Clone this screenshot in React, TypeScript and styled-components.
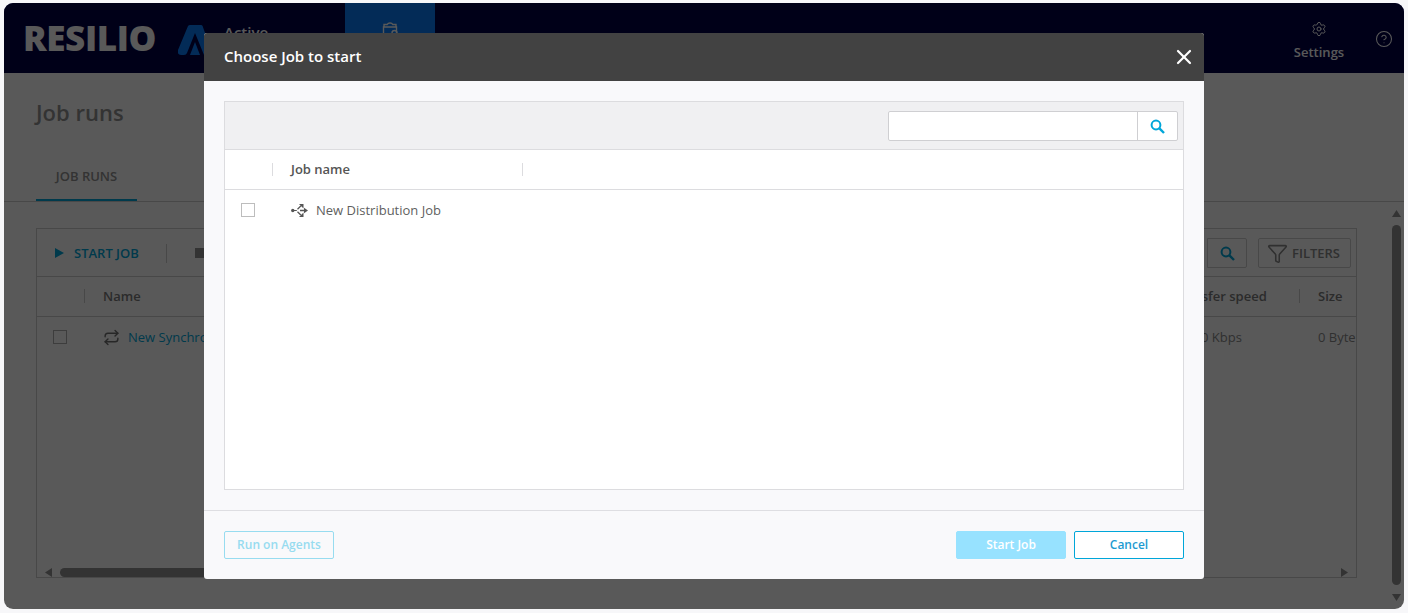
import React from 'react';
import styled, { createGlobalStyle } from 'styled-components';
import { CircleHelp, Funnel, Repeat, Settings, X } from 'lucide-react';

const Global = createGlobalStyle`
  html, body { margin: 0; padding: 0; background: #f7f7f9; overflow: hidden; }
  * { box-sizing: border-box; }
  body { font-family: "Open Sans", "Liberation Sans", sans-serif; }
`;

const Page = styled.div`
  width: 1408px;
  height: 613px;
  padding: 3px 4px 4px;
`;

const AppWindow = styled.div`
  position: relative;
  width: 1400px;
  height: 606px;
  border-radius: 9px;
  overflow: hidden;
  background: #fff;
  display: flex;
  flex-direction: column;
`;

const TopBar = styled.header`
  height: 70px;
  flex: none;
  background: #000046;
  display: flex;
  align-items: stretch;
  color: #fff;
  padding-left: 20px;
`;

const Wordmark = styled.div`
  width: 154px;
  font-size: 35px;
  line-height: 70px;
  font-weight: 800;
  letter-spacing: -0.4px;
  margin-left: -1px;
  padding-right: 0;
  flex: none;
`;

const ProductMark = styled.svg`
  width: 33px;
  height: 32px;
  margin: 21px 0 0 1px;
  flex: none;
`;

const ProductName = styled.div`
  width: 121px;
  margin-left: 13px;
  padding-top: 19px;
  font-size: 15px;
  line-height: 20px;
  font-weight: 600;
`;

const NavTile = styled.div`
  width: 90px;
  background: #097bf9;
  display: flex;
  flex-direction: column;
  align-items: center;
  padding-top: 18px;
`;

const TopRight = styled.div`
  margin-left: auto;
  display: flex;
  align-items: flex-start;
`;

const SettingsItem = styled.div`
  width: 60px;
  margin-right: 15px;
  display: flex;
  flex-direction: column;
  align-items: center;
  padding-top: 18px;
  font-size: 13px;
  line-height: 18px;
  font-weight: 600;
  color: #ffffff;
  gap: 6px;
`;

const HelpSlot = styled.div`
  width: 40px;
  padding: 27px 0 0 11px;
`;

const Main = styled.main`
  flex: 1;
  display: flex;
  flex-direction: column;
  min-height: 0;
  background: #fff;
`;

const Title = styled.h1`
  margin: 0;
  padding: 24px 0 0 32px;
  height: 78px;
  font-size: 22px;
  line-height: 30px;
  font-weight: 600;
  color: #929292;
`;

const TabBar = styled.div`
  height: 51px;
  padding-left: 32px;
  border-bottom: 1px solid #cecece;
  display: flex;
`;

const Tab = styled.div`
  width: 101px;
  text-align: center;
  font-size: 13px;
  line-height: 50px;
  font-weight: 600;
  color: #929292;
  border-bottom: 2px solid #00a6d9;
  height: 50px;
`;

const Content = styled.div`
  flex: 1;
  min-height: 0;
  display: flex;
  padding: 26px 3px 0 32px;
`;

const Panel = styled.section`
  width: 1321px;
  height: 350px;
  border: 1px solid #cecece;
  display: flex;
  flex-direction: column;
  position: relative;
  overflow: hidden;
`;

const Toolbar = styled.div`
  height: 48px;
  flex: none;
  display: flex;
  align-items: center;
  padding: 1px 5px 0 18px;
  border-bottom: 1px solid #cecece;
`;

const ToolAction = styled.div`
  display: flex;
  align-items: center;
  gap: 10px;
  font-size: 13px;
  font-weight: 600;
  color: #00a6d9;
  width: 111px;
`;

const Separator = styled.span`
  width: 1px;
  height: 19px;
  background: #cecece;
  flex: none;
`;

const StopSquare = styled.span`
  width: 10px;
  height: 10px;
  margin-left: 28px;
  background: #929292;
`;

const ToolSearch = styled.div`
  margin-left: auto;
  width: 40px;
  height: 30px;
  border: 1px solid #cecece;
  display: flex;
  align-items: center;
  justify-content: center;
  color: #00a6d9;
  border-radius: 0 2px 2px 0;
`;

const FilterButton = styled.div`
  margin-left: 11px;
  width: 93px;
  height: 30px;
  border: 1px solid #cecece;
  border-radius: 2px;
  display: flex;
  align-items: center;
  padding-left: 8px;
  gap: 4px;
  font-size: 13px;
  font-weight: 600;
  color: #8a8a8a;
`;

const PanelRow = styled.div<{ $head?: boolean }>`
  display: grid;
  grid-template-columns: 47px 1070px 145px 60px;
  align-items: center;
  height: 40px;
  flex: none;
  font-size: 13px;
  color: #929292;
  padding-bottom: ${(p) => (p.$head ? '1px' : '0')};
  border-bottom: ${(p) => (p.$head ? '1px solid #cecece' : 'none')};
`;

const PanelHeadCell = styled.div<{ $first?: boolean }>`
  height: 14px;
  line-height: 14px;
  padding-left: 18px;
  font-weight: 600;
  color: #7b7b7b;
  white-space: nowrap;
  border-left: ${(p) => (p.$first ? 'none' : '1px solid #cecece')};
`;

const PanelCell = styled.div<{ $indent?: number }>`
  padding-left: ${(p) => p.$indent ?? 19}px;
  white-space: nowrap;
  display: flex;
  align-items: center;
  gap: 8px;
  color: #8a8a8a;
`;

const PanelLink = styled.span`
  color: #00a6d9;
`;

const SyncIcon = styled(Repeat)`
  color: #707070;
  flex: none;
`;

const PanelBox = styled.span`
  display: block;
  width: 14px;
  height: 14px;
  margin-left: 16px;
  border: 1px solid #b0b0b0;
`;

const HScroll = styled.div`
  position: absolute;
  left: 0;
  right: 0;
  bottom: 0;
  height: 12px;
  display: flex;
  align-items: flex-end;
  padding: 0 7px 0 8px;
  gap: 7px;
`;

const HThumb = styled.div`
  width: 1000px;
  height: 9px;
  border-radius: 5px;
  background: #929292;
  margin-right: auto;
`;

const VArrow = styled.svg`
  width: 9px;
  height: 8px;
  flex: none;
  fill: #929292;
`;

const HArrow = styled.svg`
  width: 8px;
  height: 9px;
  flex: none;
  fill: #929292;
`;

const VScroll = styled.div`
  margin-left: auto;
  width: 9px;
  margin-top: -21px;
  height: 398px;
  display: flex;
  flex-direction: column;
  align-items: center;
  justify-content: space-between;
  padding-top: 3px;
  padding-bottom: 3px;
`;

const VThumb = styled.div`
  width: 9px;
  flex: 1;
  margin: 7px 0 9px;
  border-radius: 5px;
  background: #929292;
`;

const Backdrop = styled.div`
  position: absolute;
  inset: 0;
  background: rgba(0, 0, 0, 0.65);
  display: flex;
  justify-content: center;
  align-items: flex-start;
  padding-top: 30px;
`;

const Modal = styled.div`
  width: 1000px;
  height: 546px;
  background: #f9f9fb;
  border-radius: 3px;
  overflow: hidden;
  display: flex;
  flex-direction: column;
`;

const ModalHeader = styled.div`
  height: 48px;
  flex: none;
  background: #424242;
  color: #fff;
  display: flex;
  align-items: center;
  justify-content: space-between;
  padding: 0 8px 2px 20px;
  font-size: 15px;
  font-weight: 600;
`;

const CloseButton = styled.button`
  border: 0;
  background: none;
  padding: 0;
  width: 24px;
  height: 24px;
  color: #fff;
  display: flex;
  margin-top: 2px;
`;

const ModalBody = styled.div`
  flex: 1;
  padding: 20px 20px;
  min-height: 0;
  border-bottom: 1px solid #dedee2;
`;

const Grid = styled.div`
  height: 389px;
  border: 1px solid #dcdcdf;
  background: #fff;
  display: flex;
  flex-direction: column;
`;

const GridToolbar = styled.div`
  height: 48px;
  flex: none;
  background: #f0f0f2;
  border-bottom: 1px solid #dcdcdf;
  display: flex;
  justify-content: flex-end;
  align-items: center;
  padding: 1px 5px 0 0;
`;

const SearchBox = styled.div`
  width: 290px;
  height: 30px;
  display: flex;
  background: #fff;
  border: 1px solid #cfcfd2;
  border-radius: 2px;
`;

const SearchInput = styled.input`
  flex: 1;
  min-width: 0;
  border: 0;
  outline: 0;
  background: transparent;
`;

const SearchButton = styled.div`
  width: 40px;
  border-left: 1px solid #cfcfd2;
  color: #00a6d9;
  display: flex;
  align-items: center;
  justify-content: center;
`;

const GridHead = styled.div`
  height: 40px;
  flex: none;
  border-bottom: 1px solid #dcdcdf;
  display: grid;
  grid-template-columns: 47px 250px 1fr;
  align-items: center;
  font-size: 13px;
  font-weight: 600;
  color: #555;
`;

const HeadCell = styled.div<{ $first?: boolean }>`
  height: 13px;
  line-height: 13px;
  padding-left: 18px;
  border-left: ${(p) => (p.$first ? 'none' : '1px solid #dcdcdf')};
`;

const GridRow = styled.div`
  height: 40px;
  display: grid;
  grid-template-columns: 47px 1fr;
  align-items: center;
  font-size: 13px;
  color: #5f5f5f;
`;

const CheckBox = styled.span`
  display: block;
  width: 14px;
  height: 14px;
  margin-left: 16px;
  border: 1px solid #bdbdbd;
  background: #fff;
`;

const NameCell = styled.div`
  display: flex;
  align-items: center;
  gap: 8px;
  padding-left: 19px;
`;

const Glyph = styled.svg`
  width: 17px;
  height: 15px;
  flex: none;
`;

const Footer = styled.div`
  height: 68px;
  flex: none;
  display: flex;
  align-items: center;
  padding: 0 20px;
  gap: 8px;
`;

const ButtonBase = styled.button`
  width: 110px;
  height: 28px;
  border-radius: 2px;
  font-family: inherit;
  font-size: 12px;
  font-weight: 600;
  padding: 0 0 2px;
`;

const AgentsButton = styled(ButtonBase)`
  background: transparent;
  border: 1px solid #97dcf0;
  color: #97dcf0;
  margin-right: auto;
`;

const StartButton = styled(ButtonBase)`
  background: #97e2ff;
  border: 1px solid #97e2ff;
  color: #fff;
`;

const CancelButton = styled(ButtonBase)`
  background: #fff;
  border: 1px solid #00a6d9;
  color: #1d9bd1;
`;

function SearchGlyph() {
  return (
    <svg width="15" height="15" viewBox="0 0 15 15" fill="none" stroke="currentColor">
      <circle cx="6" cy="6" r="4.4" strokeWidth="2" />
      <path d="M9.4 9.4L14 14" strokeWidth="2.4" />
    </svg>
  );
}

function DistributionIcon() {
  return (
    <Glyph viewBox="0 0 17 15" fill="#555" stroke="none">
      <circle cx="1.8" cy="7.5" r="1.7" />
      <path d="M2 7.5h3.8" stroke="#555" strokeWidth="1.2" />
      <path d="M6.5 6.2L10 2.8" stroke="#555" strokeWidth="1.3" />
      <path d="M8 1h4.5v4.5z" />
      <path d="M9 7.5h4.5" stroke="#555" strokeWidth="1.3" />
      <path d="M13 4.8l4 2.7-4 2.7z" />
      <path d="M6.5 8.8L9.8 12" stroke="#555" strokeWidth="1.3" />
      <path d="M12.5 9.5V14H8z" />
    </Glyph>
  );
}

export default function App() {
  return (
    <Page>
      <Global />
      <AppWindow>
        <TopBar>
          <Wordmark>RESILIO</Wordmark>
          <ProductMark viewBox="0 0 33 32" fill="#097bf9" fillRule="evenodd">
            <path d="M0 26 L10 2 Q10.8 1 12 1 H23 Q24.2 1 24.6 2 L33 26 Q33.4 31 29 31 H26 L17 9 L9 29 Q8.4 31 6 31 H3 Q-1 31 0 26Z" />
            <path d="M12 31 L17 18 L22 31Z" />
          </ProductMark>
          <ProductName>Active</ProductName>
          <NavTile>
            <svg width="18" height="20" viewBox="0 0 18 20" fill="none" stroke="#fff" strokeWidth="1.4">
              <path d="M3 6V3.5h3.2a3 2.4 0 0 1 5.6 0H15V6" />
              <path d="M2.5 6h13v12h-13z" />
              <circle cx="13.5" cy="12" r="2.5" />
            </svg>
          </NavTile>
          <TopRight>
            <SettingsItem>
              <Settings size={16} strokeWidth={1.5} />
              Settings
            </SettingsItem>
            <HelpSlot>
              <CircleHelp size={18} strokeWidth={1.4} />
            </HelpSlot>
          </TopRight>
        </TopBar>
        <Main>
          <Title>Job runs</Title>
          <TabBar>
            <Tab>JOB RUNS</Tab>
          </TabBar>
          <Content>
            <Panel>
              <Toolbar>
                <ToolAction>
                  <svg width="9" height="10" viewBox="0 0 9 10" fill="#00a6d9">
                    <path d="M0 0l9 5-9 5z" />
                  </svg>
                  START JOB
                </ToolAction>
                <Separator />
                <StopSquare />
                <ToolSearch>
                  <SearchGlyph />
                </ToolSearch>
                <FilterButton>
                  <Funnel size={21} strokeWidth={1.8} />
                  FILTERS
                </FilterButton>
              </Toolbar>
              <PanelRow $head>
                <PanelHeadCell $first />
                <PanelHeadCell>Name</PanelHeadCell>
                <PanelHeadCell>Transfer speed</PanelHeadCell>
                <PanelHeadCell>Size</PanelHeadCell>
              </PanelRow>
              <PanelRow>
                <PanelBox />
                <PanelCell>
                  <SyncIcon size={17} strokeWidth={2} />
                  <PanelLink>New Synchronization Job</PanelLink>
                </PanelCell>
                <PanelCell $indent={47}>0 Kbps</PanelCell>
                <PanelCell>0 Bytes</PanelCell>
              </PanelRow>
              <HScroll>
                <HArrow viewBox="0 0 8 9">
                  <path d="M7 0v9L0 4.5z" />
                </HArrow>
                <HThumb />
                <HArrow viewBox="0 0 8 9">
                  <path d="M0 0v9l7-4.5z" />
                </HArrow>
              </HScroll>
            </Panel>
            <VScroll>
              <VArrow viewBox="0 0 9 8">
                <path d="M0 7h9L4.5 0z" />
              </VArrow>
              <VThumb />
              <VArrow viewBox="0 0 9 8">
                <path d="M0 0h9L4.5 7z" />
              </VArrow>
            </VScroll>
          </Content>
        </Main>
        <Backdrop>
          <Modal>
            <ModalHeader>
              Choose Job to start
              <CloseButton>
                <X size={24} strokeWidth={2.2} />
              </CloseButton>
            </ModalHeader>
            <ModalBody>
              <Grid>
                <GridToolbar>
                  <SearchBox>
                    <SearchInput />
                    <SearchButton>
                      <SearchGlyph />
                    </SearchButton>
                  </SearchBox>
                </GridToolbar>
                <GridHead>
                  <HeadCell $first />
                  <HeadCell>Job name</HeadCell>
                  <HeadCell />
                </GridHead>
                <GridRow>
                  <CheckBox />
                  <NameCell>
                    <DistributionIcon />
                    New Distribution Job
                  </NameCell>
                </GridRow>
              </Grid>
            </ModalBody>
            <Footer>
              <AgentsButton>Run on Agents</AgentsButton>
              <StartButton>Start Job</StartButton>
              <CancelButton>Cancel</CancelButton>
            </Footer>
          </Modal>
        </Backdrop>
      </AppWindow>
    </Page>
  );
}
